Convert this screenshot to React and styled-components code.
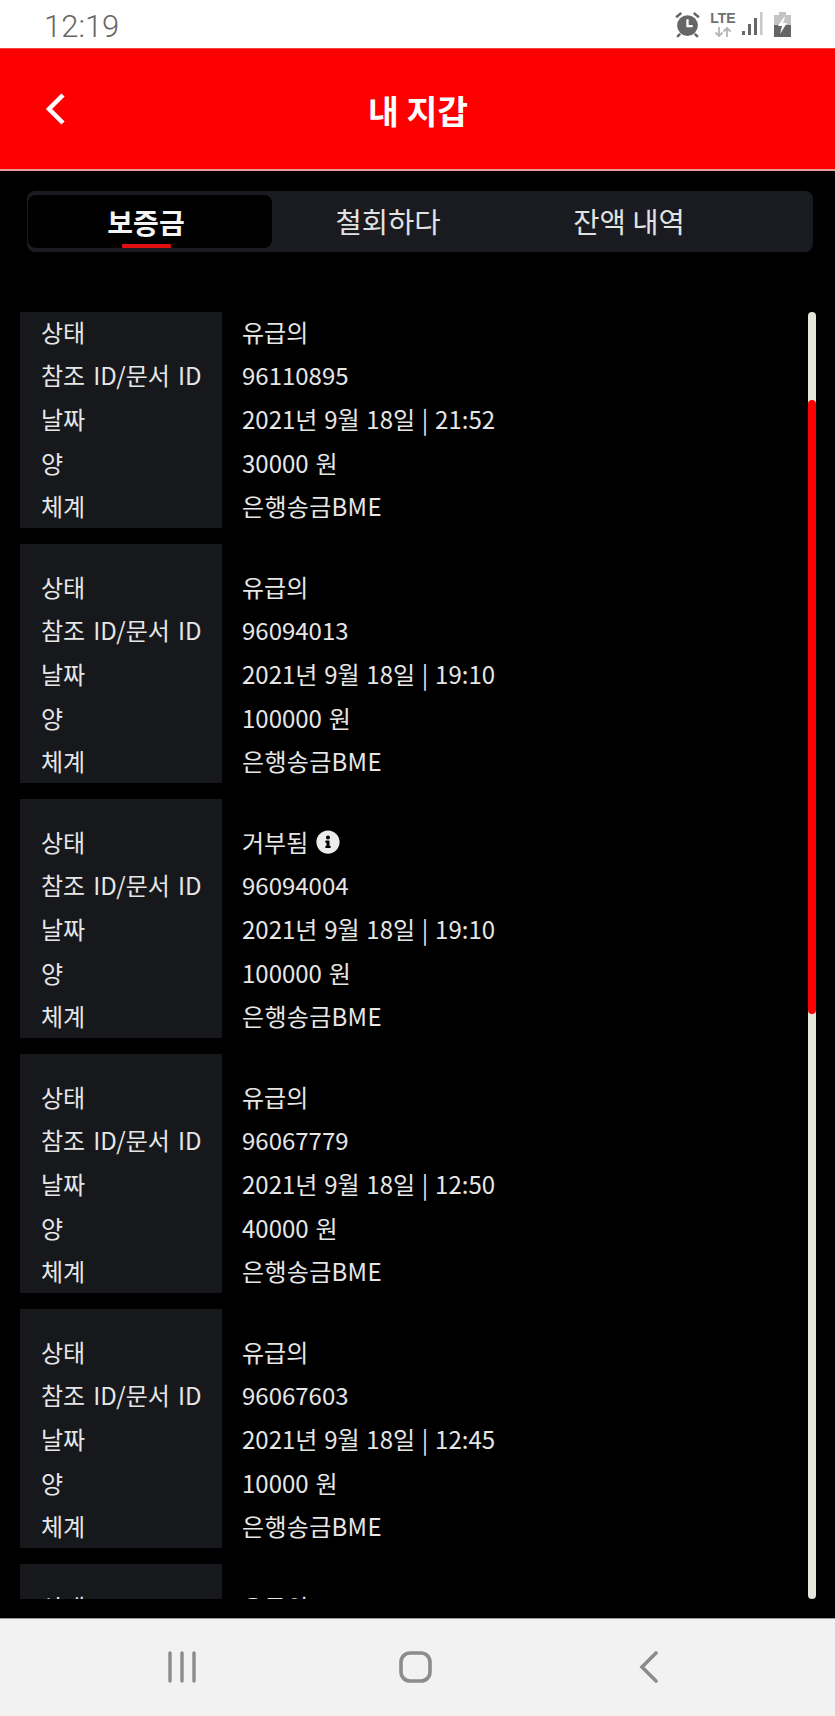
import React from 'react'
import styled, { createGlobalStyle } from 'styled-components'
import { FaInfoCircle } from 'react-icons/fa'

const GlobalStyle = createGlobalStyle`
  html, body { margin: 0; padding: 0; background: #000; }
  * { box-sizing: border-box; }
`

const Phone = styled.div`
  width: 835px;
  height: 1716px;
  display: flex;
  flex-direction: column;
  background: #000;
  font-family: 'Noto Sans CJK KR', 'Noto Sans', sans-serif;
  overflow: hidden;
`

const StatusBar = styled.div`
  height: 48px;
  flex: none;
  background: #fff;
  display: flex;
  align-items: center;
  justify-content: space-between;
  padding: 0 44px 0 44px;
  color: #666;
`

const Clock = styled.span`
  font-family: Roboto, sans-serif;
  font-size: 31px;
  font-weight: 300;
  line-height: 1;
  margin-top: 4px;
`

const StatusIcons = styled.div`
  display: flex;
  align-items: center;
  height: 48px;
`

const AlarmIcon = styled.svg`
  width: 27px;
  height: 27px;
  margin-right: 10px;
`

const LteBox = styled.div`
  display: flex;
  flex-direction: column;
  align-items: center;
  width: 24px;
  margin-right: 7px;
`

const LteText = styled.span`
  font-family: 'Liberation Sans', sans-serif;
  font-size: 14px;
  font-weight: 700;
  line-height: 13px;
  color: #707070;
`

const ArrowsIcon = styled.svg`
  width: 18px;
  height: 10px;
  margin-top: 2px;
`

const SignalIcon = styled.svg`
  width: 21px;
  height: 24px;
  margin-right: 11px;
`

const BatteryIcon = styled.svg`
  width: 17px;
  height: 25px;
`

const Header = styled.header`
  height: 123px;
  flex: none;
  position: relative;
  background: #f00;
  border-top: 1px solid #f24545;
  border-bottom: 2px solid #e79a9a;
  display: flex;
  align-items: center;
  justify-content: center;
`

const BackButton = styled.svg`
  position: absolute;
  left: 44px;
  top: 43px;
  width: 24px;
  height: 34px;
`

const Title = styled.h1`
  margin: 2px 0 0 1px;
  color: #fff;
  font-size: 33.5px;
  font-weight: 700;
  line-height: 1;
`

const TabBar = styled.div`
  flex: none;
  height: 61px;
  margin: 20px 22px 0 27px;
  padding: 4px 1px;
  background: #191b20;
  border-radius: 8px;
  display: grid;
  grid-template-columns: 244px 241px 241px;
`

const Tab = styled.div`
  position: relative;
  display: flex;
  align-items: center;
  justify-content: center;
  padding-right: ${(p) => (p.$active ? 8 : 9)}px;
  font-size: ${(p) => (p.$active ? 28 : 28.6)}px;
  line-height: 1;
  font-weight: ${(p) => (p.$active ? 700 : 400)};
  color: ${(p) => (p.$active ? '#f4f4f4' : '#e2e2e2')};
  background: ${(p) => (p.$active ? '#000' : 'transparent')};
  border-radius: 8px;
`

const TabLine = styled.span`
  position: absolute;
  left: 94px;
  bottom: 0;
  width: 49px;
  height: 4px;
  background: #e01010;
  border-radius: 1px;
`

const ListArea = styled.div`
  flex: none;
  position: relative;
  height: 1287px;
  margin-top: 60px;
  overflow: hidden;
`

const List = styled.div`
  display: flex;
  flex-direction: column;
  gap: 16px;
  margin-top: -23px;
  padding-left: 20px;
`

const Card = styled.div`
  display: grid;
  grid-template-columns: 202px 1fr;
  flex: none;
  height: 239px;
  padding-right: 60px;
`

const Labels = styled.div`
  background: #16181c;
  padding: 21px 0 0 21px;
  word-spacing: 2.7px;
`

const Values = styled.div`
  padding: 21px 0 0 20px;
  word-spacing: 1.4px;
`

const Row = styled.div`
  height: 43.6px;
  display: flex;
  align-items: center;
  gap: 8px;
  font-size: 24px;
  line-height: 1;
  color: #e6e6e6;
  white-space: nowrap;
`

const MethodRow = styled(Row)`
  letter-spacing: 0.3px;
`

const Info = styled(FaInfoCircle)`
  width: 24px;
  height: 24px;
  color: #ececec;
`

const ScrollTrack = styled.div`
  position: absolute;
  top: 0;
  bottom: 0;
  left: 808px;
  width: 8px;
  background: #e5e6d9;
  border-radius: 4px;
`

const ScrollThumb = styled.div`
  position: absolute;
  top: 88px;
  left: 0;
  width: 8px;
  height: 614px;
  background: #f00;
  border-radius: 4px;
`

const NavBar = styled.nav`
  flex: 1;
  margin-top: 19px;
  background: #f2f2f2;
  border-top: 1px solid #9a9a9a;
  display: grid;
  grid-template-columns: 231px 240px 20px;
  align-items: start;
  padding: 32px 0 0 168px;
`

const NavIcon = styled.svg`
  display: block;
  height: 32px;
  width: ${(p) => p.$w}px;
`

const records = [
  { status: '유급의', id: '96110895', date: '2021년 9월 18일 | 21:52', amount: '30000 원' },
  { status: '유급의', id: '96094013', date: '2021년 9월 18일 | 19:10', amount: '100000 원' },
  { status: '거부됨', id: '96094004', date: '2021년 9월 18일 | 19:10', amount: '100000 원', info: true },
  { status: '유급의', id: '96067779', date: '2021년 9월 18일 | 12:50', amount: '40000 원' },
  { status: '유급의', id: '96067603', date: '2021년 9월 18일 | 12:45', amount: '10000 원' },
  { status: '유급의', id: '96067500', date: '2021년 9월 18일 | 12:40', amount: '10000 원' },
]

const labels = ['상태', '참조 ID/문서 ID', '날짜', '양', '체계']

const RecordCard = ({ record }) => (
  <Card>
    <Labels>
      {labels.map((label) => (
        <Row key={label}>{label}</Row>
      ))}
    </Labels>
    <Values>
      <Row>
        {record.status}
        {record.info && <Info />}
      </Row>
      <Row>{record.id}</Row>
      <Row>{record.date}</Row>
      <Row>{record.amount}</Row>
      <MethodRow>은행송금BME</MethodRow>
    </Values>
  </Card>
)

export default function App() {
  return (
    <Phone>
      <GlobalStyle />
      <StatusBar>
        <Clock>12:19</Clock>
        <StatusIcons>
          <AlarmIcon viewBox="0 0 26 26">
            <circle cx="13" cy="14" r="10" fill="#666" />
            <path d="M13 8v6.5h5" fill="none" stroke="#fff" strokeWidth="2.2" />
            <path d="M2 6l5-4M24 6l-5-4M6 22l-3 3M20 22l3 3" stroke="#666" strokeWidth="2.4" fill="none" />
          </AlarmIcon>
          <LteBox>
            <LteText>LTE</LteText>
            <ArrowsIcon viewBox="0 0 18 10">
              <path d="M5 0v9M1.5 5.5L5 9l3.5-3.5" fill="none" stroke="#b5b5b5" strokeWidth="1.8" />
              <path d="M13 10V1M9.5 4.5L13 1l3.5 3.5" fill="none" stroke="#b5b5b5" strokeWidth="1.8" />
            </ArrowsIcon>
          </LteBox>
          <SignalIcon viewBox="0 0 21 24">
            <rect x="0" y="19" width="3" height="4" fill="#666" />
            <rect x="6" y="12" width="3" height="11" fill="#666" />
            <rect x="12" y="6" width="3" height="17" fill="#666" />
            <rect x="18" y="0" width="2.5" height="23" fill="#c8c8c8" />
          </SignalIcon>
          <BatteryIcon viewBox="0 0 17 25">
            <rect x="5" y="0" width="7" height="3" fill="#c4c4c4" />
            <rect x="0" y="3" width="17" height="10" fill="#c4c4c4" />
            <rect x="0" y="13" width="17" height="12" fill="#666" />
            <path d="M10 5L4 14h4l-2 8 7-11H9l2-6z" fill="#fff" />
          </BatteryIcon>
        </StatusIcons>
      </StatusBar>

      <Header>
        <BackButton viewBox="0 0 24 34">
          <path d="M19 3L5 17l14 14" fill="none" stroke="#fff" strokeWidth="4.5" />
        </BackButton>
        <Title>내 지갑</Title>
      </Header>

      <TabBar>
        <Tab $active>
          보증금
          <TabLine />
        </Tab>
        <Tab>철회하다</Tab>
        <Tab>잔액 내역</Tab>
      </TabBar>

      <ListArea>
        <List>
          {records.map((record, i) => (
            <RecordCard key={i} record={record} />
          ))}
        </List>
        <ScrollTrack>
          <ScrollThumb />
        </ScrollTrack>
      </ListArea>

      <NavBar>
        <NavIcon viewBox="0 0 28 32" $w={28}>
          <path d="M2 2v28M14 2v28M26 2v28" stroke="#8c8c8c" strokeWidth="3.4" strokeLinecap="round" />
        </NavIcon>
        <NavIcon viewBox="0 0 33 32" $w={33}>
          <rect x="2" y="2" width="29" height="28" rx="9" fill="none" stroke="#8c8c8c" strokeWidth="3.6" />
        </NavIcon>
        <NavIcon viewBox="0 0 20 32" $w={20}>
          <path d="M17 2L3 16l14 14" fill="none" stroke="#8c8c8c" strokeWidth="3.6" strokeLinecap="round" />
        </NavIcon>
      </NavBar>
    </Phone>
  )
}
